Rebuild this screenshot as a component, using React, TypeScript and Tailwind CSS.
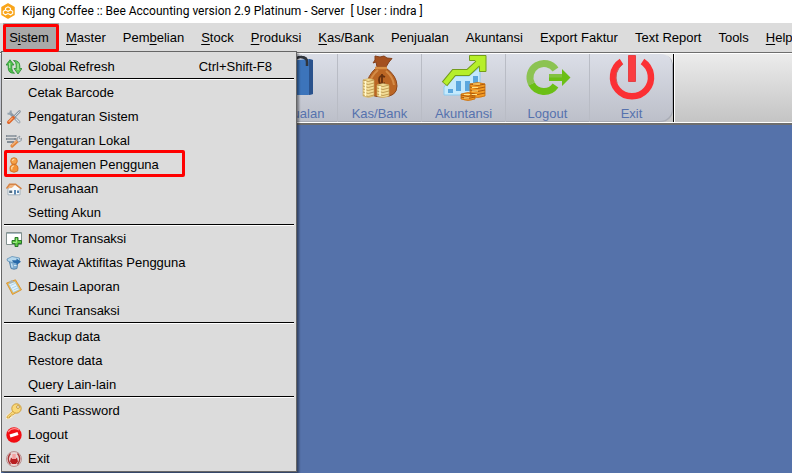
import type { ReactNode } from "react";

type MenuEntry = { label: string; shortcut?: string; icon?: ReactNode; marked?: boolean };

const menuBar = [
  ["S", "i", "stem"],
  ["", "M", "aster"],
  ["Pem", "b", "elian"],
  ["", "S", "tock"],
  ["", "P", "roduksi"],
  ["", "K", "as/Bank"],
  ["Pen", "j", "ualan"],
  ["Akuntansi", "", ""],
  ["Export Faktur", "", ""],
  ["Text Report", "", ""],
  ["Tools", "", ""],
  ["", "H", "elp"],
];

function Icon({ children }: { children: ReactNode }) {
  return (
    <svg viewBox="0 0 16 16" className="size-4" aria-hidden="true">
      {children}
    </svg>
  );
}

const refreshIcon = (
  <Icon>
    <path d="M0 6 4 .8 8 6H5.800V9.500q0 3 2.700 4.700Q2.200 14.500 2.200 9V6Z" fill="#4fc14c" stroke="#2a8a33" strokeWidth=".8" />
    <path d="M7.500 1.500Q13.800 1.500 13.800 7V9.500H16L12 15 8 9.500H10.200V6q0-3-2.700-4.500Z" fill="#63c95a" stroke="#2a8a33" strokeWidth=".8" />
    <path d="M3.700 4v5M12 4.500V11" stroke="#b5edaa" strokeWidth="1.200" />
  </Icon>
);

const toolsIcon = (
  <Icon>
    <path d="m4.500 4.500 8.500 8.500" stroke="#8b98a4" strokeWidth="2.800" strokeLinecap="round" />
    <path d="M4.800 1.500 4.500 4.500 1.500 4.800" fill="none" stroke="#95a3af" strokeWidth="2" />
    <path d="m8 8 5.500-5.500" stroke="#8b98a4" strokeWidth="2.600" strokeLinecap="round" />
    <path d="m8.500 7.500 5-5" stroke="#d5dce2" strokeWidth="1" />
    <path d="m2.700 13.200 4.500-4.400" stroke="#e0662a" strokeWidth="3.400" strokeLinecap="round" />
    <path d="m2.700 12.800 3.900-3.900" stroke="#fbb27a" strokeWidth="1.200" />
    <path d="m10 10 3 3" stroke="#dae2e8" strokeWidth="1.200" strokeLinecap="round" />
  </Icon>
);

const localIcon = (
  <Icon>
    <path d="M0 3h10.500M0 6h10.500M1 9h7" stroke="#858e96" strokeWidth="2.200" />
    <path d="M1 3h8.500M1 6h7" stroke="#b9c0c6" strokeWidth=".8" />
    <path d="m6 13 5.500-5" stroke="#e2843a" strokeWidth="3.200" strokeLinecap="round" />
    <path d="m5.800 12.500 5-4.700" stroke="#ffd0a0" />
    <path d="m11 7.500.5-3 2.500-1.500-1 2 1 1.200 2-1-.8 2.500-2.700 1.300Z" fill="#d8dee3" stroke="#7f8a93" strokeWidth=".7" />
  </Icon>
);

const userIcon = (
  <Icon>
    <path d="M4.300 14Q2.800 7.500 8 7.300q5.200.2 3.700 6.700Q8 16.500 4.300 14Z" fill="#f39338" stroke="#cc6a1d" strokeWidth=".8" />
    <circle cx="8" cy="4" r="3.300" fill="#f5a24a" stroke="#cc6a1d" strokeWidth=".8" />
    <path d="M6.300 3.800q.5-1.600 2-1.500M5.800 12.500V10.500q.5-1.500 2.200-1.500" fill="none" stroke="#ffe0ae" strokeWidth="1.200" />
  </Icon>
);

const houseIcon = (
  <Icon>
    <path d="M2 7.500v6.300h12V7L9.500 3.500Z" fill="#f8fafb" stroke="#93a5b3" strokeWidth=".8" />
    <path d="M.5 7 3.500 3H9.500l6 4.500" fill="#f0b27c" />
    <path d="m4.500 8 4.700-4 5.300 4" fill="#f8fafb" />
    <path d="M.5 7.500 3.500 3.200H9.500L15.500 7.800" fill="none" stroke="#d58446" strokeWidth="1.500" />
    <path d="M3.200 9.500h3v2.500h-3Z" fill="#526b80" />
    <path d="M8 9h2v4.500H8ZM11 9.500h2v2.500h-2Z" fill="#5a86b0" />
  </Icon>
);

const newIcon = (
  <Icon>
    <path d="M.5 1.500h15v12H.5Z" fill="#fff" stroke="#83918f" />
    <path d="M1 2h14v1H1Z" fill="#a9bac2" />
    <path d="M9 6.500h3v3h3.500v3H12v3H9v-3H6v-3h3Z" fill="#5cc93f" stroke="#1f6e22" strokeWidth=".9" />
    <path d="M10.500 7.500v4H7" fill="none" stroke="#b6efa0" strokeWidth=".8" />
  </Icon>
);

const historyIcon = (
  <Icon>
    <path d="M3 5.500h9L11 13.500q-3 1.500-6 0Z" fill="#7fadd2" stroke="#4a779f" strokeWidth=".8" />
    <path d="m1 4 5-2.500L13.500 3v2.500L6 7.500 1.500 6Z" fill="#b5d7ec" stroke="#5f90b6" strokeWidth=".8" />
    <path d="M6 5.200h4.500V3.500L15 6.800 10.500 10V8.300Q7 8 6 5.200Z" fill="#2768a8" />
    <path d="m5.500 8.500.8 4M8 10.500h2.500" stroke="#d3e8f5" strokeWidth="1.200" />
  </Icon>
);

const reportIcon = (
  <Icon>
    <path d="M.5 4 9.500.8l6 10L6.500 15.500Z" fill="#f7b944" stroke="#d08d2b" strokeWidth=".8" />
    <path d="m2.500 5 6.300-2.300L13.500 10.500 7.300 13.500Z" fill="#e0f1fc" stroke="#8dbbd8" strokeWidth=".7" />
    <path d="m3 3 2.500-2L8 2.500 4.500 4.500Z" fill="#a9b4b8" />
    <path d="m4.500 6.500 4.500-2M6 9l4.500-2M7.500 11l4.500-2" stroke="#acd3eb" />
  </Icon>
);

const keyIcon = (
  <Icon>
    <path d="m8 7-7.500 6.500V15.500h3V14H5.500V12H7.500L10 9.500" fill="#f9d878" stroke="#fff3d0" strokeWidth="1.600" />
    <path d="m8 7-7 6.500V15h2.500V13.500H5V12h2l3-2.500" fill="#f9d878" stroke="#c18f32" strokeWidth=".7" />
    <circle cx="10.500" cy="5.500" r="4.700" fill="#f9d878" stroke="#c89635" strokeWidth=".9" />
    <circle cx="12" cy="4" r="1.400" fill="#fffbe7" stroke="#a87521" strokeWidth=".7" />
  </Icon>
);

const logoutIcon = (
  <Icon>
    <circle cx="8" cy="8" r="7.700" fill="#f20d12" />
    <path d="M2 5Q6.500-.5 13 3" fill="none" stroke="#ff8a8a" strokeWidth="1.200" />
    <path d="m4 9 8-2.500" stroke="#fff" strokeWidth="3.400" />
  </Icon>
);

const exitIcon = (
  <Icon>
    <circle cx="8" cy="8" r="7.500" fill="#ead3d3" stroke="#b08080" strokeWidth=".8" />
    <path d="M4.500 2.500Q0 7.500 4.500 13.300M11.500 2.500q4.500 5 0 10.800" fill="none" stroke="#a83434" strokeWidth="1.300" />
    <path d="M5 6.500 6.500 8h3L11 6.500 12 10.500l-2 2.500H6L4 10.500Z" fill="#b81f22" />
    <path d="M6.300 3h3.400V8H6.300Z" fill="#f4a0a0" />
  </Icon>
);

const sections: MenuEntry[][] = [
  [{ label: "Global Refresh", shortcut: "Ctrl+Shift-F8", icon: refreshIcon }],
  [
    { label: "Cetak Barcode" },
    { label: "Pengaturan Sistem", icon: toolsIcon },
    { label: "Pengaturan Lokal", icon: localIcon },
    { label: "Manajemen Pengguna", icon: userIcon, marked: true },
    { label: "Perusahaan", icon: houseIcon },
    { label: "Setting Akun" },
  ],
  [
    { label: "Nomor Transaksi", icon: newIcon },
    { label: "Riwayat Aktifitas Pengguna", icon: historyIcon },
    { label: "Desain Laporan", icon: reportIcon },
    { label: "Kunci Transaksi" },
  ],
  [{ label: "Backup data" }, { label: "Restore data" }, { label: "Query Lain-lain" }],
  [
    { label: "Ganti Password", icon: keyIcon },
    { label: "Logout", icon: logoutIcon },
    { label: "Exit", icon: exitIcon },
  ],
];

function BeeLogo() {
  return (
    <svg viewBox="0 0 14 16" className="h-4 w-3.5" aria-hidden="true">
      <path d="M7 1 13 4.300v7.400L7 15 1 11.700V4.300Z" fill="#f9a51a" stroke="#f9a51a" strokeWidth="1.500" strokeLinejoin="round" />
      <path d="M4.500 7V5.200L7 3.800l2.500 1.400V7L7 8.300ZM4.500 7 2.300 8.300v2.200l2.200 1.300L7 10.500l2.500 1.300 2.200-1.300V8.300L9.500 7" fill="none" stroke="#fff" strokeWidth="1.100" />
    </svg>
  );
}

function BagArt() {
  return (
    <svg viewBox="0 0 48 48" className="size-12" aria-hidden="true">
      <path d="M23 10V7q1-4 6-4t6 5v4" fill="none" stroke="#30353d" strokeWidth="2.500" />
      <path d="m6 8 30-3 5 1v34l-5 1H6Z" fill="#3c74bb" />
      <path d="m37 5 4 1v34l-4 1Z" fill="#2a528c" />
      <path d="M29 3q6 0 6 5v4" fill="none" stroke="#30353d" strokeWidth="2.500" />
    </svg>
  );
}

function MoneyArt() {
  return (
    <svg viewBox="0 0 48 48" className="size-12" aria-hidden="true">
      <path d="m19 2 5 1 4-1 3 2 5 .5-3 3.500-3 5h-9l-1-5-3 1 2-3Z" fill="#a4501f" stroke="#84401b" />
      <path d="M20 14q5-3 10 0 11 8 11 18 0 11-15 11T11 32q0-10 9-18Z" fill="#bb6624" stroke="#8e481d" />
      <path d="M22 16q-7 6-8 13M30 17q7 6 8 14" fill="none" stroke="#d48c48" strokeWidth="2" />
      <path d="M19 14h12" stroke="#d98f45" strokeWidth="2.500" />
      <path d="M29 23q-6-3-6 3t6 3M26 20v11" fill="none" stroke="#66300f" strokeWidth="1.800" />
      <path d="M7 26q5.500-3 11 0v16q-5.500 3-11 0ZM21 31q6-3 12 0v11q-6 3-12 0Z" fill="#f3dd98" stroke="#c9a860" strokeWidth=".6" />
      <path d="M7 26q5 3 11 0M7 29q5 3 11 0M7 32q5 3 11 0M7 35q5 3 11 0M7 38q5 3 11 0M7 41q5 3 11 0M21 31q6 3 12 0M21 34q6 3 12 0M21 37q6 3 12 0M21 40q6 3 12 0" fill="none" stroke="#bf9d55" />
      <path d="M9.500 27v15M24 32v10" stroke="#fff8d0" strokeWidth="1.500" />
    </svg>
  );
}

function ChartArt() {
  return (
    <svg viewBox="0 0 48 48" className="size-12" aria-hidden="true">
      <path d="M4 41V33l10-11h15l11-9v28Z" fill="#c4e9fc" stroke="#8ccaf0" />
      <path d="M8 35h5v4H8ZM16 27h5v10h-5ZM25 27h5v10h-5ZM33 22h5v10h-5Z" fill="#5ba7de" />
      <path d="m4.500 30 9.500-11.500h14L40 7.500" fill="none" stroke="#739c1c" strokeWidth="7" />
      <path d="M29.500 1.500H46v16h-6.500v-5L35 6.500h-5.500Z" fill="#b6ef2a" stroke="#739c1c" />
      <path d="m5 29.500 9-11h14L41 6.500" fill="none" stroke="#b6ef2a" strokeWidth="5" />
      <path d="M30 30q8-3 15 0v12q-7 3-15 0ZM21 40q7-3 14 0v5q-7 3-14 0Z" fill="#f29a24" stroke="#c86d0c" strokeWidth=".8" />
      <path d="M30 30q8 3 15 0M30 33q8 3 15 0M30 36q8 3 15 0M30 39q8 3 15 0M21 41q7 3 14 0M21 43q7 3 14 0" fill="none" stroke="#ad5a0c" />
      <path d="M33 30h7M32 33.500h6M32 37h6M32 40.500h5M24 40.500h6M24 44h5" stroke="#ffe287" />
    </svg>
  );
}

function LogoutArt() {
  return (
    <svg viewBox="0 0 48 48" className="size-12" aria-hidden="true">
      <path d="M31.500 15.500A14 14 0 0 0 7.600 30" fill="none" stroke="#8cc352" strokeWidth="7" />
      <path d="M7.600 30A14 14 0 0 0 31.500 31.500" fill="none" stroke="#6bbf16" strokeWidth="7" />
      <path d="M25 20h13v-5l8.500 8.500L38 32v-5H25Z" fill="#6bbf16" />
      <path d="M25 20h13v3.500H25Z" fill="#82c141" />
    </svg>
  );
}

function PowerArt() {
  return (
    <svg viewBox="0 0 48 48" className="size-12" aria-hidden="true">
      <path d="M13.500 7.500A19 19 0 1 0 34.500 7.500" fill="none" stroke="#fb3034" strokeWidth="6.500" />
      <path d="M14.500 10.500A16 16 0 0 0 9 29" fill="none" stroke="#c4605c" />
      <path d="M20.500 1.500h7v26h-7Z" fill="#fb3c40" stroke="#e23034" strokeWidth=".8" />
    </svg>
  );
}

const toolbar = [
  { label: "Penjualan", art: <BagArt /> },
  { label: "Kas/Bank", art: <MoneyArt /> },
  { label: "Akuntansi", art: <ChartArt /> },
  { label: "Logout", art: <LogoutArt /> },
  { label: "Exit", art: <PowerArt /> },
];

function MenuItem({ item }: { item: MenuEntry }) {
  return (
    <button type="button" role="menuitem" className="relative flex h-6 w-full items-center pt-0.5 pl-0.5 text-left">
      <span className="flex w-[22px] shrink-0">{item.icon}</span>
      <span className="flex-1">{item.label}</span>
      {item.shortcut ? <span className="pr-[22px]">{item.shortcut}</span> : null}
      {item.marked ? <span className="absolute -top-0.5 left-0 h-[27px] w-[181px] rounded-xs border-3 border-[#ff0000]" /> : null}
    </button>
  );
}

function SistemMenu() {
  return (
    <div
      role="menu"
      className="absolute top-7 left-px z-10 w-[296px] border border-[#666] bg-[#dcdcdc] px-0.5 pt-0.5 pb-px shadow-[2px_2px_2px_rgba(0,0,0,0.4)]"
    >
      {sections.map((items, index) => (
        <div key={items[0].label} role="group">
          {index > 0 ? <hr className="h-0.5 border-t border-b border-t-black border-b-white" /> : null}
          {items.map((item) => (
            <MenuItem key={item.label} item={item} />
          ))}
        </div>
      ))}
    </div>
  );
}

export default function App() {
  return (
    <div className="flex min-h-screen flex-col overflow-hidden bg-[#5572aa] font-['Liberation_Sans',Arial,sans-serif] text-[13px] text-black">
      <header className="flex h-[23px] items-center gap-[7px] bg-white pb-0.5 pl-px font-[Roboto,sans-serif] text-[12px]">
        <BeeLogo />
        <h1 className="whitespace-pre">Kijang Coffee :: Bee Accounting version 2.9 Platinum - Server  [ User : indra ]</h1>
      </header>

      <div className="relative">
        <nav className="flex h-[29px] bg-[#dcdcdc] pl-[3px]">
          {menuBar.map(([before, key, after], index) => (
            <button
              key={before + key + after}
              type="button"
              className={
                index === 0
                  ? "relative w-14 shrink-0 bg-[#a9a9a9] pr-2.5 pl-1.5 whitespace-nowrap"
                  : "mr-px shrink-0 pr-[9px] pl-[7px] whitespace-nowrap"
              }
            >
              {before}
              <span className="underline underline-offset-2">{key}</span>
              {after}
              {index === 0 ? <span className="absolute inset-x-0 top-px bottom-0 z-20 rounded-xs border-3 border-[#ff0000]" /> : null}
            </button>
          ))}
        </nav>
        <SistemMenu />
      </div>

      <div className="border-t border-b-2 border-[#6e6e6e]">
        <div className="flex h-[70px] border-y border-white bg-linear-to-b from-[#ececec] to-[#c4c4c4]">
          <div className="flex rounded-r-xl bg-linear-to-b from-[#dbdee7] to-[#bcbfc9] pl-[253px] shadow-[inset_-1px_-1px_0_#a9acb5]">
            {toolbar.map(({ label, art }) => (
              <button
                key={label}
                type="button"
                className="flex w-[84px] flex-col items-center border-l border-[#b9bcc5] text-[#5672ae]"
              >
                {art}
                <span className="pt-1 leading-4">{label}</span>
              </button>
            ))}
          </div>
          <div className="w-px bg-black" />
          <div className="w-px bg-white" />
        </div>
      </div>
      <main className="flex-1 border-l border-white" />
    </div>
  );
}
